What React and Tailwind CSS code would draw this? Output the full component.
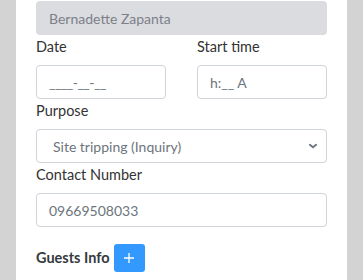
import React from 'react';

const font = { fontFamily: 'Lato, "Open Sans", sans-serif' };

const inputCls =
  'w-full h-[34px] rounded-[4px] border border-[#ced4da] bg-white px-[12px] text-[14px] text-[#6c757d] flex items-center';

const Label = ({ children }) => (
  <div className="h-[30px] leading-[24px] text-[14.5px] text-[#333]">{children}</div>
);

export default function App() {
  return (
    <div className="w-[363px] h-[280px] bg-[#d3d3d3] overflow-hidden" style={font}>
      <div className="ml-[16px] w-[331px] h-full bg-white px-[20px] pt-[1px]">
        <div className="w-full h-[34px] rounded-[4px] bg-[#dadce0] px-[13px] text-[14px] text-[#7d8088] flex items-center">
          Bernadette Zapanta
        </div>

        <div className="grid grid-cols-2 gap-x-[31px]">
          <div>
            <Label>Date</Label>
            <div className={inputCls}>
              <span className="tracking-[-0.5px] text-[#6c757d]">____-__-__</span>
            </div>
          </div>
          <div>
            <Label>Start time</Label>
            <div className={inputCls}>h:__ A</div>
          </div>
        </div>

        <Label>Purpose</Label>
        <div className={inputCls + ' justify-between pl-[16px] pr-[8px]'}>
          <span>Site tripping (Inquiry)</span>
          <svg width="10" height="10" viewBox="0 0 16 16" fill="none" stroke="#6c757d" strokeWidth="3" strokeLinecap="round" strokeLinejoin="round">
            <path d="M3 6l5 4 5-4" />
          </svg>
        </div>

        <Label>Contact Number</Label>
        <div className={inputCls}>09669508033</div>

        <div className="mt-[17px] flex items-center">
          <span className="text-[14.5px] font-bold text-[#343a40]">Guests Info</span>
          <button className="ml-[4px] w-[31px] h-[28px] rounded-[3px] bg-[#3399ff] flex items-center justify-center">
            <svg width="12" height="12" viewBox="0 0 12 12" stroke="white" strokeWidth="1.3">
              <path d="M6 1v10M1 6h10" />
            </svg>
          </button>
        </div>
      </div>
    </div>
  );
}
